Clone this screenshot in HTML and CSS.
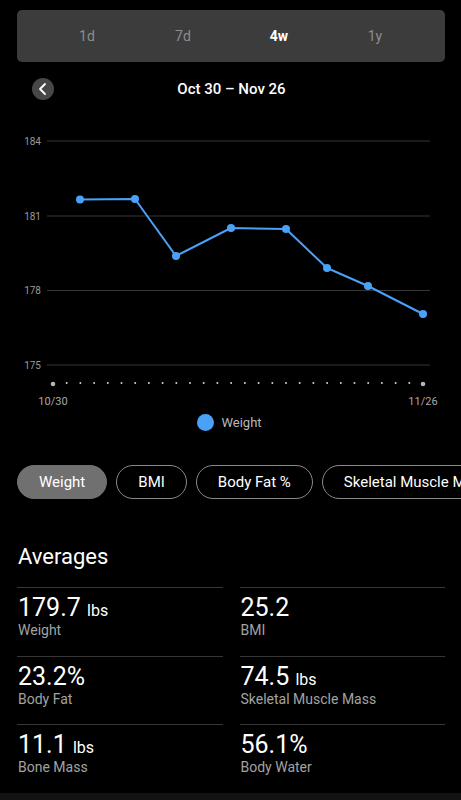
FILE: index.html
```html
<!DOCTYPE html>
<html lang="en">
<head>
  <meta charset="UTF-8" />
  <meta name="viewport" content="width=device-width, initial-scale=1.0" />
  <title>Weight - 4w</title>
  <link rel="stylesheet" href="styles.css">
</head>
<body>
  <div class="range">
    <span>1d</span>
    <span>7d</span>
    <span class="active">4w</span>
    <span>1y</span>
  </div>

  <div class="period">
    <button class="back" aria-label="Previous">
      <svg width="22" height="22" viewBox="0 0 22 22"><polyline points="13,6 8,11 13,16" fill="none" stroke="#fff" stroke-width="1.8" stroke-linecap="round" stroke-linejoin="round"/></svg>
    </button>
    <div class="title">Oct 30 – Nov 26</div>
    <div></div>
  </div>

  <svg class="chart" width="461" height="310" viewBox="0 102 461 310">
    <g class="grid">
      <line x1="47" y1="141" x2="430" y2="141"/>
      <line x1="47" y1="216" x2="430" y2="216"/>
      <line x1="47" y1="290.5" x2="430" y2="290.5"/>
      <line x1="47" y1="365" x2="430" y2="365"/>
    </g>
    <g class="ylabels">
      <text x="41" y="144.5">184</text>
      <text x="41" y="219.5">181</text>
      <text x="41" y="294">178</text>
      <text x="41" y="368.5">175</text>
    </g>
    <polyline class="line" points="80,199.5 135,199 176,256 231,228 286,229 327,268 368,286 423,314"/>
    <g class="points">
      <circle cx="80" cy="199.5" r="4"/>
      <circle cx="135" cy="199" r="4"/>
      <circle cx="176" cy="256" r="4"/>
      <circle cx="231" cy="228" r="4"/>
      <circle cx="286" cy="229" r="4"/>
      <circle cx="327" cy="268" r="4"/>
      <circle cx="368" cy="286" r="4"/>
      <circle cx="423" cy="314" r="4"/>
    </g>
    <g class="days" id="days"></g>
    <text class="date" x="53" y="405">10/30</text>
    <text class="date" x="423" y="405">11/26</text>
  </svg>

  <div class="legend"><span class="dot"></span>Weight</div>

  <div class="chips">
    <span class="chip selected">Weight</span>
    <span class="chip">BMI</span>
    <span class="chip">Body Fat %</span>
    <span class="chip">Skeletal Muscle Mass</span>
  </div>

  <h2>Averages</h2>

  <div class="stats">
    <div class="stat"><div class="value">179.7 <small>lbs</small></div><div class="label">Weight</div></div>
    <div class="stat"><div class="value">25.2</div><div class="label">BMI</div></div>
    <div class="stat"><div class="value">23.2%</div><div class="label">Body Fat</div></div>
    <div class="stat"><div class="value">74.5 <small>lbs</small></div><div class="label">Skeletal Muscle Mass</div></div>
    <div class="stat"><div class="value">11.1 <small>lbs</small></div><div class="label">Bone Mass</div></div>
    <div class="stat"><div class="value">56.1%</div><div class="label">Body Water</div></div>
  </div>

  <div class="navbar"></div>

  <script>
    // one tick per day, Oct 30 - Nov 26
    const days = document.getElementById("days");
    let dots = "";
    for (let i = 0; i < 28; i++) {
      const x = 53 + i * (370 / 27);
      const end = i === 0 || i === 27;
      dots += '<circle cx="' + x.toFixed(1) + '" cy="' + (end ? 384 : 383) + '" r="' + (end ? 2.3 : 1) + '"' + (end ? ' class="end"' : '') + '/>';
    }
    days.innerHTML = dots;
  </script>
</body>
</html>
```

FILE: styles.css
```css
body {
  font-family: Roboto, 'Noto Sans', sans-serif;
  margin: 0;
  padding: 0;
  background: #000;
  color: #fff;
  width: 461px;
  overflow: hidden;
}
.range {
  margin: 10px 16px 0 17px;
  height: 52px;
  padding: 0 22px;
  background: #3c3c3c;
  border-radius: 5px;
  display: grid;
  grid-template-columns: repeat(4, 1fr);
  align-items: center;
  text-align: center;
  font-size: 14px;
  color: #8d8d8d;
}
.range .active {
  color: #fff;
  font-weight: bold;
}
.period {
  margin-top: 14px;
  height: 26px;
  display: grid;
  grid-template-columns: 1fr auto 1fr;
  align-items: center;
}
.back {
  width: 22px;
  height: 22px;
  margin-left: 32px;
  padding: 0;
  border: none;
  border-radius: 50%;
  background: #474747;
  display: flex;
  align-items: center;
  justify-content: center;
}
.title {
  font-size: 15px;
  font-weight: 500;
  padding-left: 2px;
}
.chart {
  display: block;
}
.grid line {
  stroke: #363636;
  stroke-width: 1;
}
.ylabels text {
  fill: #9a9a9a;
  font-size: 10px;
  text-anchor: end;
}
.line {
  fill: none;
  stroke: #4aa1f8;
  stroke-width: 2;
  stroke-linejoin: round;
}
.points circle {
  fill: #4aa1f8;
}
.days circle {
  fill: #cfcfcf;
}
.days circle.end {
  fill: #b5b5b5;
}
.date {
  fill: #a8a8a8;
  font-size: 11px;
  text-anchor: middle;
}
.legend {
  height: 20px;
  display: flex;
  align-items: center;
  justify-content: center;
  gap: 7px;
  padding-right: 2px;
  font-size: 13px;
  color: #b8b8b8;
}
.legend .dot {
  width: 17px;
  height: 17px;
  border-radius: 50%;
  background: #4aa1f8;
}
.chips {
  margin-top: 33px;
  padding-left: 17px;
  display: flex;
  gap: 9px;
  white-space: nowrap;
  overflow: hidden;
}
.chip {
  flex: none;
  height: 32px;
  line-height: 32px;
  padding: 0 21px;
  border: 1px solid #8a8a8a;
  border-radius: 17px;
  font-size: 15px;
  color: #fff;
}
.chip.selected {
  background: #707070;
  border-color: #707070;
}
h2 {
  margin: 44px 0 0 18px;
  font-size: 22px;
  line-height: 28px;
  font-weight: normal;
}
.stats {
  margin-top: 16px;
  padding: 0 16px 0 17px;
  display: grid;
  grid-template-columns: 1fr 1fr;
  column-gap: 17px;
}
.stat {
  height: 68.5px;
  box-sizing: border-box;
  border-top: 1px solid #383838;
  padding: 5px 0 0 1px;
}
.value {
  font-size: 25px;
  line-height: 29px;
  height: 29px;
}
.value small {
  font-size: 16px;
  line-height: 0;
}
.label {
  font-size: 14px;
  line-height: 17px;
  color: #a3a3a3;
}
.navbar {
  height: 10px;
  background: #121212;
}
```
